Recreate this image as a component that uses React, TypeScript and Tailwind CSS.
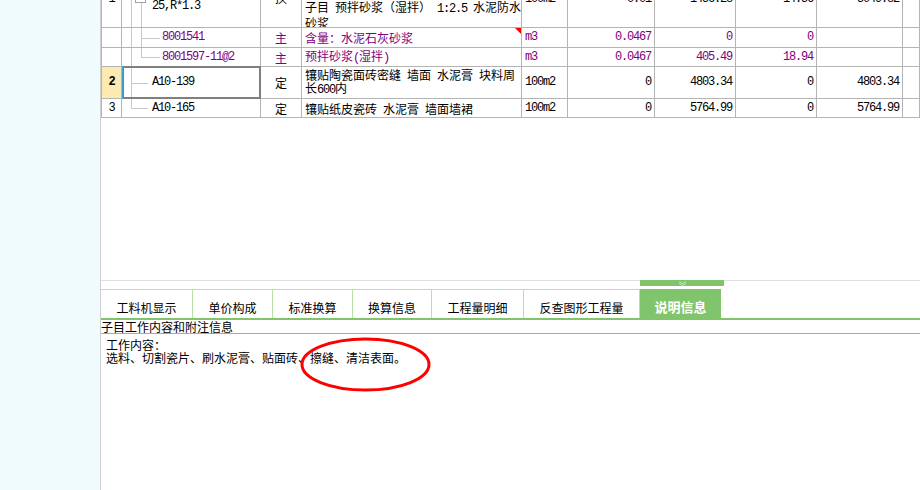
import React from "react";

// ================================
// STYLES
// ================================

const cn = (...c: (string | false | undefined)[]) => c.filter(Boolean).join(" ");

const GRID =
  "grid grid-cols-[20px_139px_41px_220px_46px_87px_81px_81px_86px_17px] border-l border-[#b4b4b4]";
const MONO = "font-['Liberation_Mono',monospace] text-[12px] leading-[13px] tracking-[-1.2px]";
const CJK = "font-['Noto_Sans_CJK_SC',sans-serif] text-[12px] leading-[13px]";
const PURPLE = "text-[#800080]";
const SP = "\u2002"; // half-width space, 6px like the grid font

// latin part inside a CJK line, 6px per char
const M: React.FC<{ children: React.ReactNode }> = ({ children }) => (
  <span className="font-['Liberation_Mono',monospace] tracking-[-1.2px]">{children}</span>
);

// ================================
// CELLS
// ================================

const Cell: React.FC<{ className?: string; children?: React.ReactNode }> = ({ className, children }) => (
  <div className={cn("relative overflow-hidden border-r border-b border-[#b4b4b4] flex", className)}>
    {children}
  </div>
);

const Num: React.FC<{ v?: string; purple?: boolean; cut?: boolean }> = ({ v, purple, cut }) => (
  <Cell className={cn("justify-end pr-[3px]", cut ? "items-start" : "items-center")}>
    {v && <span className={cn(MONO, purple ? PURPLE : "text-black", cut && "-mt-[7px]")}>{v}</span>}
  </Cell>
);

// tree guide lines inside the code column
const VLine: React.FC<{ x: number; to?: "bottom" | "mid"; top?: string }> = ({ x, to = "bottom", top }) => (
  <div
    className={cn("absolute top-0 w-px bg-[#c8c8c8]", to === "bottom" ? "bottom-0" : "bottom-1/2", top)}
    style={{ left: x }}
  />
);
const HLine: React.FC<{ x1: number; x2: number }> = ({ x1, x2 }) => (
  <div className="absolute top-1/2 h-px bg-[#c8c8c8]" style={{ left: x1, width: x2 - x1 }} />
);

// ================================
// TABLE
// ================================

function Table() {
  return (
    <div className="flex flex-col">
      {/* row 1 (cut at top) */}
      <div className={cn(GRID, "h-[28px]")}>
        <Cell className="justify-center items-start">
          <span className={cn(MONO, "-mt-[7px]")}>1</span>
        </Cell>
        <Cell className="items-start pl-[30px]">
          <VLine x={9} />
          <VLine x={19} top="!top-[3px]" />
          <div className="absolute left-[13px] -top-[8px] w-[11px] h-[11px] border border-[#a0a0a0] bg-white" />
          <span className={MONO}>25,R*1.3</span>
        </Cell>
        <Cell className="justify-center items-start">
          <span className={cn(CJK, "-mt-[9px]")}>换</span>
        </Cell>
        <Cell className="flex-col pl-[3px]">
          <span className={cn(CJK, "whitespace-pre")}>
            子目{SP}预拌砂浆（湿拌）{SP}<M>1:2.5</M>{SP}水泥防水
          </span>
          <span className={CJK}>砂浆</span>
        </Cell>
        <Cell className="items-start pl-[3px]">
          <span className={cn(MONO, "-mt-[7px]")}>100m2</span>
        </Cell>
        <Num v="0.01" cut />
        <Num v="1456.28" cut />
        <Num v="14.56" cut />
        <Num v="5049.82" cut />
        <Cell />
      </div>

      {/* row 1a */}
      <div className={cn(GRID, "h-[20px]")}>
        <Cell />
        <Cell className="items-center pl-[40px]">
          <VLine x={9} />
          <VLine x={19} />
          <HLine x1={19} x2={38} />
          <span className={cn(MONO, PURPLE)}>8001541</span>
        </Cell>
        <Cell className="justify-center items-center">
          <span className={cn(CJK, PURPLE)}>主</span>
        </Cell>
        <Cell className="items-center pl-[3px]">
          <span className={cn(CJK, PURPLE)}>含量：水泥石灰砂浆</span>
          <div className="absolute right-0 top-0 w-0 h-0 border-t-[6px] border-l-[6px] border-t-[#ff0000] border-l-transparent" />
        </Cell>
        <Cell className="items-center pl-[3px]">
          <span className={cn(MONO, PURPLE)}>m3</span>
        </Cell>
        <Num v="0.0467" purple />
        <Num v="0" purple />
        <Num v="0" purple />
        <Cell />
        <Cell />
      </div>

      {/* row 1b */}
      <div className={cn(GRID, "h-[19px]")}>
        <Cell />
        <Cell className="items-center pl-[40px]">
          <VLine x={9} />
          <VLine x={19} to="mid" />
          <HLine x1={19} x2={38} />
          <span className={cn(MONO, PURPLE)}>8001597-11@2</span>
        </Cell>
        <Cell className="justify-center items-center">
          <span className={cn(CJK, PURPLE)}>主</span>
        </Cell>
        <Cell className="items-center pl-[3px]">
          <span className={cn(CJK, PURPLE)}>
            预拌砂浆<M>(</M>湿拌<M>)</M>
          </span>
        </Cell>
        <Cell className="items-center pl-[3px]">
          <span className={cn(MONO, PURPLE)}>m3</span>
        </Cell>
        <Num v="0.0467" purple />
        <Num v="405.49" purple />
        <Num v="18.94" purple />
        <Cell />
        <Cell />
      </div>

      {/* row 2 (selected) */}
      <div className={cn(GRID, "h-[32px]")}>
        <Cell className="justify-center items-center bg-[#fde9b2]">
          <span className={cn(MONO, "font-bold")}>2</span>
        </Cell>
        <Cell className="items-center pl-[30px] !overflow-visible">
          <VLine x={9} />
          <HLine x1={9} x2={26} />
          <span className={MONO}>A10-139</span>
          <div className="absolute -top-px left-0 -right-px -bottom-px border-2 border-[#7f7f7f]" />
          <div className="absolute -top-px left-0 -bottom-px w-px bg-[#36a3dc]" />
        </Cell>
        <Cell className="justify-center items-center">
          <span className={CJK}>定</span>
        </Cell>
        <Cell className="flex-col justify-center pl-[3px]">
          <span className={cn(CJK, "whitespace-pre")}>
            镶贴陶瓷面砖密缝{SP}墙面{SP}水泥膏{SP}块料周
          </span>
          <span className={CJK}>
            长<M>600</M>内
          </span>
        </Cell>
        <Cell className="items-center pl-[3px]">
          <span className={MONO}>100m2</span>
        </Cell>
        <Num v="0" />
        <Num v="4803.34" />
        <Num v="0" />
        <Num v="4803.34" />
        <Cell />
      </div>

      {/* row 3 */}
      <div className={cn(GRID, "h-[19px]")}>
        <Cell className="justify-center items-center">
          <span className={MONO}>3</span>
        </Cell>
        <Cell className="items-center pl-[30px]">
          <VLine x={9} to="mid" />
          <HLine x1={9} x2={26} />
          <span className={MONO}>A10-165</span>
        </Cell>
        <Cell className="justify-center items-center">
          <span className={CJK}>定</span>
        </Cell>
        <Cell className="items-center pl-[3px]">
          <span className={cn(CJK, "whitespace-pre")}>
            镶贴纸皮瓷砖{SP}水泥膏{SP}墙面墙裙
          </span>
        </Cell>
        <Cell className="items-center pl-[3px]">
          <span className={MONO}>100m2</span>
        </Cell>
        <Num v="0" />
        <Num v="5764.99" />
        <Num v="0" />
        <Num v="5764.99" />
        <Cell />
      </div>
    </div>
  );
}

// ================================
// TABS
// ================================

const tabs = [
  { label: "工料机显示", w: "w-[92px]" },
  { label: "单价构成", w: "w-[80px]" },
  { label: "标准换算", w: "w-[80px]" },
  { label: "换算信息", w: "w-[79px]" },
  { label: "工程量明细", w: "w-[92px]" },
  { label: "反查图形工程量", w: "w-[116px]" },
];

function Tabs() {
  return (
    <div className="flex flex-col">
      {/* collapse handle */}
      <div className="flex h-[9px] items-start">
        <div className="w-[539px] border-t border-[#e0e0e0]" />
        <div className="w-[84px] h-[6px] bg-[#80c46b] flex justify-center pt-[1px]">
          <svg width="9" height="5" viewBox="0 0 9 5">
            <polyline points="1,0.5 4.5,2.5 8,0.5" fill="none" stroke="#c6e8b8" strokeWidth="1" />
            <polyline points="1,2.5 4.5,4.5 8,2.5" fill="none" stroke="#c6e8b8" strokeWidth="1" />
          </svg>
        </div>
        <div className="flex-1 border-t border-[#e0e0e0]" />
      </div>

      <div className="flex h-[29px]">
        {tabs.map((t) => (
          <div
            key={t.label}
            className={cn(
              t.w,
              CJK,
              "flex justify-center items-center pt-[6px] border-t border-r border-[#b6e3a2] text-black"
            )}
          >
            {t.label}
          </div>
        ))}
        <div className="w-[81px] flex justify-center items-center pt-[6px] bg-[#80c46b] text-white font-bold font-['Noto_Sans_CJK_SC',sans-serif] text-[13px] leading-[13px]">
          说明信息
        </div>
      </div>
      <div className="h-[2px] bg-[#80c46b]" />
    </div>
  );
}

// ================================
// APP
// ================================

export default function App() {
  return (
    <div className="flex w-[920px] h-[490px] overflow-hidden bg-white">
      <div className="w-[100px] bg-[#f0fbfd]" />
      <div className="flex-1 flex flex-col border-l border-[#cfcfcf]">
        <Table />
        <div className="flex-1" />
        <Tabs />
        <div className={cn(CJK, "h-[13px] text-black border-b border-[#a8a8b0] box-content")}>子目工作内容和附注信息</div>
        <div className="relative h-[156px] pl-[5px] pt-[4px]">
          <p className={CJK}>工作内容：</p>
          <p className={CJK}>选料、切割瓷片、刷水泥膏、贴面砖、擦缝、清洁表面。</p>
          <svg className="absolute left-[199px] top-[3px]" width="131" height="55" viewBox="0 0 131 55">
            <ellipse cx="65.5" cy="27.5" rx="63.5" ry="25.5" fill="none" stroke="#ff0000" strokeWidth="3" />
          </svg>
        </div>
      </div>
    </div>
  );
}
